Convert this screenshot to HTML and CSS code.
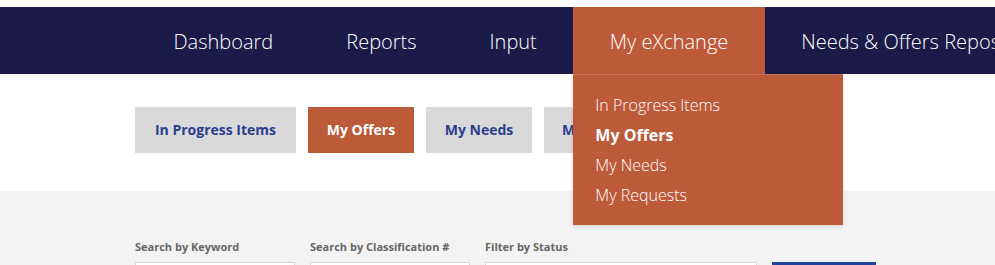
FILE: index.html
```html
<!DOCTYPE html>
<html lang="en">
<head>
  <meta charset="UTF-8">
  <meta name="viewport" content="width=device-width, initial-scale=1">
  <title>My eXchange - My Offers</title>
  <link rel="stylesheet" href="styles.css">
</head>
<body>
  <header class="topbar">
    <nav class="main-nav">
      <ul>
        <li><a href="#">Dashboard</a></li>
        <li><a href="#">Reports</a></li>
        <li><a href="#">Input</a></li>
        <li class="active has-menu">
          <a href="#">My eXchange</a>
          <ul class="dropdown">
            <li><a href="#">In Progress Items</a></li>
            <li class="current"><a href="#">My Offers</a></li>
            <li><a href="#">My Needs</a></li>
            <li><a href="#">My Requests</a></li>
          </ul>
        </li>
        <li><a href="#">Needs &amp; Offers Repository</a></li>
      </ul>
    </nav>
  </header>

  <!-- sub tabs -->
  <section class="tabs">
    <a href="#" class="tab long">In Progress Items</a>
    <a href="#" class="tab selected">My Offers</a>
    <a href="#" class="tab">My Needs</a>
    <a href="#" class="tab">My Requests</a>
  </section>

  <!-- filters -->
  <section class="filters">
    <form class="filter-row">
      <div class="field">
        <label>Search by Keyword</label>
        <input type="text">
      </div>
      <div class="field">
        <label>Search by Classification #</label>
        <input type="text">
      </div>
      <div class="field wide">
        <label>Filter by Status</label>
        <input type="text">
      </div>
      <div class="field">
        <label>&nbsp;</label>
        <button type="button">Search</button>
      </div>
    </form>
  </section>
</body>
</html>
```

FILE: styles.css
```css
html, body { margin: 0; padding: 0; }
body { font-family: "Open Sans", Arial, sans-serif; background: #fff; overflow: hidden; width: 995px; }

.topbar { margin-top: 7px; background: #1b1a48; height: 67px; position: relative; z-index: 5; }
.main-nav > ul { list-style: none; margin: 0; padding: 0 0 0 137px; display: flex; white-space: nowrap; height: 67px; }
.main-nav > ul > li { position: relative; }
.main-nav > ul > li > a { display: block; padding: 1px 36.5px 0; height: 66px; line-height: 67px; color: #fff; text-decoration: none; font-size: 20px; font-weight: 300; }
.main-nav > ul > li.active > a { background: #bc5a3a; }

.dropdown { list-style: none; margin: 0; padding: 15px 0 15px; position: absolute; left: 0; top: 67px; width: 270px; background: #bc5a3a; border-top: 1px solid rgba(255,255,255,0.18); box-shadow: 0 2px 4px rgba(0,0,0,0.12); }
.dropdown li a { display: block; padding: 0 22px; line-height: 30px; color: #fff; text-decoration: none; font-size: 16px; font-weight: 300; }
.dropdown li.current a { font-weight: 700; }

.tabs { display: flex; gap: 12px; padding: 33px 0 38px 135px; }
.tab { display: block; box-sizing: border-box; min-width: 106px; padding: 0 18px; height: 46px; line-height: 46px; background: #d9d9d9; color: #2a3e8e; font-size: 14px; font-weight: 700; text-align: center; text-decoration: none; white-space: nowrap; }
.tab.long { width: 161px; }
.tab.selected { background: #bc5a3a; color: #fff; }

.filters { background: #f3f3f3; padding: 48px 0 0 135px; height: 200px; }
.filter-row { display: flex; gap: 15px; margin: 0; }
.field { display: flex; flex-direction: column; width: 160px; }
.field.wide { width: 272px; }
.field label { font-size: 11px; font-weight: 700; color: #666; line-height: 15px; margin-bottom: 8px; }
.field input { height: 32px; box-sizing: border-box; border: 1px solid #d6d9e0; background: #fff; margin: 0; padding: 0 8px; }
.field button { width: 104px; height: 32px; background: #21449a; color: #fff; border: none; font-weight: 700; font-family: inherit; }
```
